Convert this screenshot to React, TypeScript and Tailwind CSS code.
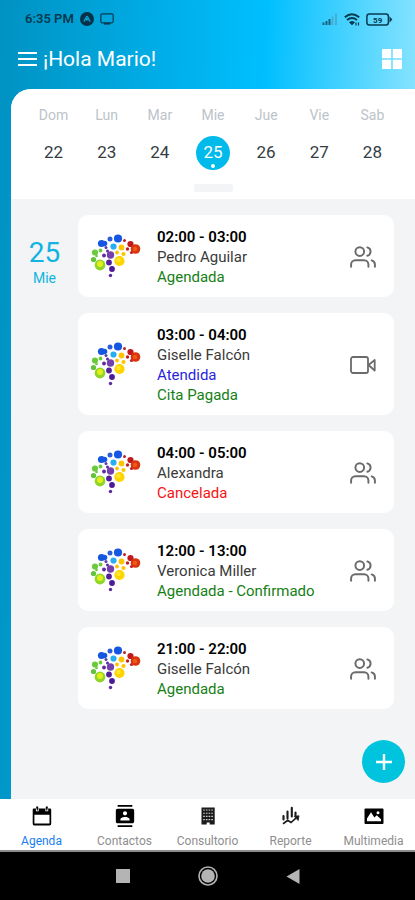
import { useState } from 'react';
import { FiUsers } from 'react-icons/fi';
import { MdContacts } from 'react-icons/md';

interface Status {
  label: string;
  color: string;
}

interface Appointment {
  time: string;
  patient: string;
  video?: boolean;
  statuses: Status[];
}

const days = [
  { name: 'Dom', date: 22 },
  { name: 'Lun', date: 23 },
  { name: 'Mar', date: 24 },
  { name: 'Mie', date: 25 },
  { name: 'Jue', date: 26 },
  { name: 'Vie', date: 27 },
  { name: 'Sab', date: 28 },
];

const appointments: Appointment[] = [
  { time: '02:00 - 03:00', patient: 'Pedro Aguilar', statuses: [{ label: 'Agendada', color: 'text-[#168016]' }] },
  {
    time: '03:00 - 04:00',
    patient: 'Giselle Falcón',
    video: true,
    statuses: [
      { label: 'Atendida', color: 'text-[#2a1fe0]' },
      { label: 'Cita Pagada', color: 'text-[#168016]' },
    ],
  },
  { time: '04:00 - 05:00', patient: 'Alexandra', statuses: [{ label: 'Cancelada', color: 'text-[#f51414]' }] },
  { time: '12:00 - 13:00', patient: 'Veronica Miller', statuses: [{ label: 'Agendada - Confirmado', color: 'text-[#168016]' }] },
  { time: '21:00 - 22:00', patient: 'Giselle Falcón', statuses: [{ label: 'Agendada', color: 'text-[#168016]' }] },
];

// cx, cy, r, fill
const dots: [number, number, number, string][] = [
  [21.5, 21.5, 3.6, '#1557e0'],
  [24.5, 21.5, 2.8, '#1557e0'],
  [30, 17, 2.5, '#2a5fd8'],
  [38, 16.5, 4.1, '#1557e0'],
  [33.5, 24.5, 3.1, '#27aef0'],
  [44.5, 18.5, 1.5, '#c0202a'],
  [50.5, 22, 3.1, '#c0181c'],
  [47.5, 27, 1.7, '#c0202a'],
  [51.5, 30.5, 1.6, '#c0202a'],
  [55.5, 27, 4.8, '#d8350f'],
  [41.5, 25.5, 2.9, '#ffc400'],
  [37, 30.5, 1.9, '#ffc400'],
  [43.5, 32, 2.1, '#ffc400'],
  [39.5, 39, 5.1, '#ffd400'],
  [15, 30.5, 3.1, '#6cc93c'],
  [20.5, 28.5, 1.9, '#6cc93c'],
  [16.5, 34, 1.3, '#6cc93c'],
  [13.5, 37.5, 2.6, '#62c23a'],
  [20, 43, 5.4, '#8ed628'],
  [26, 25.5, 1.5, '#5b3fa8'],
  [27.5, 29, 1.5, '#5b2a9c'],
  [24, 33.5, 1.9, '#5b2a9c'],
  [30.5, 33, 3.7, '#7440ae'],
  [29, 40.5, 2.9, '#53209c'],
  [32, 47, 2.9, '#4c1a96'],
  [30.5, 53.5, 1.7, '#5b2a9c'],
];

function BrainLogo() {
  return (
    <svg viewBox="0 0 70 70" className="-my-2 size-[70px] shrink-0" aria-hidden="true">
      {dots.map(([cx, cy, r, fill]) => (
        <circle key={`${cx}-${cy}`} cx={cx} cy={cy} r={r} fill={fill} />
      ))}
      <circle cx="20" cy="42" r="3" fill="#e4ee1c" />
      <circle cx="55" cy="27" r="2.2" fill="#ee5a1c" />
      <circle cx="38.5" cy="38" r="2.2" fill="#ffea28" />
    </svg>
  );
}

function VideoIcon() {
  return (
    <svg
      viewBox="0 0 26 26"
      className="size-[26px] shrink-0 text-[#6b6b6b]"
      fill="none"
      stroke="currentColor"
      strokeWidth="1.8"
      strokeLinejoin="round"
      aria-hidden="true"
    >
      <rect x="1" y="5" width="17" height="16" rx="2" />
      <path d="M18.500 13l6.200-5v10.500z" />
    </svg>
  );
}

function CalendarIcon() {
  return (
    <svg viewBox="0 0 20 20" className="size-5" fill="currentColor" aria-hidden="true">
      <path fillRule="evenodd" d="M2 2.500h16a1.200 1.200 0 0 1 1.200 1.200v14.100a1.600 1.600 0 0 1-1.600 1.600H2.200A1.500 1.500 0 0 1 .7 17.800V3.700A1.200 1.200 0 0 1 2 2.500zM2.400 8.800v8.800h15.100V8.800z" />
      <path d="M4.200.6h2v3h-2zM13.800.6h2v3h-2z" />
      <path d="M3.900 2.600h.8v1.800h1.200V2.600h.8v2.600H3.900zM13.400 2.600h.8v1.800h1.200V2.600h.8v2.600h-2.800z" fill="#fff" />
    </svg>
  );
}

function BuildingIcon() {
  return (
    <svg viewBox="0 0 20 20" className="size-5" aria-hidden="true">
      <path d="M3.500 1.500h13.200v17h-5v-2h-3v2H3.500z" fill="#1b1b1b" />
      <path d="M5.200 4h10M5.200 7.200h10M5.200 10.400h10M5.200 13.600h10" stroke="#d0d0d0" strokeWidth="1.100" strokeDasharray="1.600 1.100" />
    </svg>
  );
}

function ReportIcon() {
  return (
    <svg viewBox="0 0 20 20" className="size-5" fill="none" stroke="#1b1b1b" strokeLinecap="round" aria-hidden="true">
      <path d="M2.500 10v3.500M6.500 5.500v7M10.800 1.800v8.700M14.500 6.500v3" strokeWidth="2.100" />
      <path d="M2.500 17.500l4.200-3.200 3.300 2.200 5.500-4.800" strokeWidth="1.600" />
      <path d="M13.500 10.300l4.500-.5-.8 4.400z" fill="#1b1b1b" strokeWidth=".8" strokeLinejoin="round" />
    </svg>
  );
}

function PictureIcon() {
  return (
    <svg viewBox="0 0 20 20" className="size-5" aria-hidden="true">
      <rect x=".5" y="2.500" width="19" height="15.500" rx="1" fill="#000" />
      <path d="M3 15.200v-2.600l4-6.400 3.400 5.400 2.300-2.300 4.300 4v1.900z" fill="#fff" />
      <circle cx="14" cy="6.800" r="1.500" fill="#fff" />
    </svg>
  );
}

const tabs = [
  { label: 'Agenda', icon: <CalendarIcon /> },
  { label: 'Contactos', icon: <MdContacts className="size-[22px]" /> },
  { label: 'Consultorio', icon: <BuildingIcon /> },
  { label: 'Reporte', icon: <ReportIcon /> },
  { label: 'Multimedia', icon: <PictureIcon /> },
];

function StatusBar() {
  return (
    <div className="flex h-[38px] items-center justify-between pr-[22px] pl-[25px] text-[#073b50]">
      <div className="flex items-center gap-[6px]">
        <span className="text-[13px] font-semibold">6:35 PM</span>
        <svg viewBox="0 0 14 14" className="size-[14px]" aria-hidden="true">
          <circle cx="7" cy="7" r="7" fill="#063146" />
          <path d="M3.800 9.800L6.200 5q.8-1.500 1.600 0l2.400 4.800M5.800 8.500L7 6.500l1.200 2" fill="none" stroke="#0aa5d8" strokeWidth="1.200" />
        </svg>
        <svg viewBox="0 0 14 12" className="h-3 w-[14px]" fill="none" stroke="currentColor" aria-hidden="true">
          <rect x=".8" y=".8" width="12.400" height="9" rx="1.500" strokeWidth="1.200" />
          <path d="M4 10.800h6" strokeWidth="1.600" />
        </svg>
      </div>
      <div className="flex items-center gap-[6px]">
        <svg viewBox="0 0 16 12" className="h-3 w-4" fill="none" strokeWidth="2" aria-hidden="true">
          <path d="M1.500 12V9.500M4.500 12V8M7.500 12V6" stroke="#17617c" />
          <path d="M10.500 12V3.500M14 12V0.500" stroke="#4aa5c4" strokeWidth="1.600" />
        </svg>
        <svg viewBox="0 0 16 13" className="h-[13px] w-4" fill="none" stroke="currentColor" aria-hidden="true">
          <path d="M.8 4.200q7-6 14.400 0" strokeWidth="2" />
          <path d="M3 7q5-4 10 0" strokeWidth="1.900" />
          <path d="M5.300 9.300q2.700-2 5.400 0L8 12z" fill="currentColor" strokeWidth=".6" />
          <path d="M12 12.500v-3M14.500 9.500v3" strokeWidth="1.200" />
        </svg>
        <svg viewBox="0 0 27 13" className="h-[13px] w-[27px]" aria-hidden="true">
          <rect x=".9" y=".9" width="21.500" height="11.200" rx="2.500" fill="none" stroke="currentColor" strokeWidth="1.500" />
          <path d="M23.500 3.200l2.800 3.300-2.800 3.300z" fill="currentColor" />
          <text x="11.700" y="9.500" textAnchor="middle" fontSize="8" fontWeight="700" fill="currentColor">59</text>
        </svg>
      </div>
    </div>
  );
}

function AppointmentCard({ appointment }: { appointment: Appointment }) {
  return (
    <li className="flex items-center rounded-[10px] bg-white pt-3 pr-[18px] pb-[10px] pl-[2px]">
      <BrainLogo />
      <div className="ml-[7px] flex-1 text-[15px] leading-5 text-[#3a3a3a]">
        <p className="font-semibold text-black">{appointment.time}</p>
        <p>{appointment.patient}</p>
        {appointment.statuses.map((status) => (
          <p key={status.label} className={status.color}>{status.label}</p>
        ))}
      </div>
      {appointment.video ? (
        <VideoIcon />
      ) : (
        <FiUsers className="size-[26px] shrink-0 text-[#6b6b6b]" strokeWidth={1.8} />
      )}
    </li>
  );
}

export default function App() {
  const [selected, setSelected] = useState(25);
  const [activeTab, setActiveTab] = useState('Agenda');

  return (
    <div className="flex min-h-screen flex-col bg-[linear-gradient(92deg,#0092c2_0%,#00bfff_60%,#8ae4ff_95%)] font-[Roboto,sans-serif]">
      <StatusBar />

      <header className="flex h-[51px] items-center pr-[13px] pb-[9px] pl-[18px] text-white">
        <button type="button" aria-label="Menú">
          <svg viewBox="0 0 19 16" className="h-4 w-[19px]" stroke="currentColor" strokeWidth="1.900" aria-hidden="true">
            <path d="M0 2h19M0 8h19M0 14h19" />
          </svg>
        </button>
        <h1 className="ml-[6px] flex-1 text-[21px] leading-6">¡Hola Mario!</h1>
        <button type="button" aria-label="Vista">
          <svg viewBox="0 0 20 20" className="size-5" fill="currentColor" aria-hidden="true">
            <path d="M0 0h9.200v9.200H0zM10.800 0H20v9.200h-9.200zM0 10.800h9.200V20H0zM10.800 10.800H20V20h-9.200z" />
          </svg>
        </button>
      </header>

      <main className="relative ml-[11px] flex flex-1 flex-col overflow-hidden rounded-tl-[20px] bg-[#f2f4f5]">
        <section className="bg-white px-4 pt-4 pb-[7px]">
          <div className="grid grid-cols-7">
            {days.map((day) => (
              <div key={day.date} className="flex flex-col items-center">
                <span className="text-[14px] leading-5 text-[#bcc3c9]">{day.name}</span>
                <button
                  type="button"
                  onClick={() => setSelected(day.date)}
                  className={`relative mt-[11px] size-[34px] rounded-full text-[17px] ${
                    day.date === selected ? 'bg-[#00baec] text-white' : 'text-[#343d42]'
                  }`}
                >
                  {day.date}
                  {day.date === selected && (
                    <span className="absolute bottom-[2px] left-[15px] size-1 rounded-full bg-white" />
                  )}
                </button>
              </div>
            ))}
          </div>
          <div className="mx-auto mt-[14px] h-2 w-[39px] rounded-[2px] bg-[#f2f4f5]" />
        </section>

        <section className="flex pt-4 pr-[21px] pb-20">
          <div className="w-[67px] shrink-0 pt-[21px] text-center text-[#10b3e2]">
            <p className="text-[28px] leading-[34px]">25</p>
            <p className="text-[14px] leading-4">Mie</p>
          </div>
          <ul className="flex flex-1 flex-col gap-4">
            {appointments.map((appointment) => (
              <AppointmentCard key={appointment.time} appointment={appointment} />
            ))}
          </ul>
        </section>

        <button
          type="button"
          aria-label="Agregar cita"
          className="absolute right-[10px] bottom-4 flex size-[43px] items-center justify-center rounded-full bg-[#00c4de] text-white"
        >
          <svg viewBox="0 0 16 16" className="size-4" stroke="currentColor" strokeWidth="2.400" aria-hidden="true">
            <path d="M8 0v16M0 8h16" />
          </svg>
        </button>
      </main>

      <nav className="grid h-[53px] grid-cols-5 border-b-2 border-[#8c8c8c] bg-white">
        {tabs.map((tab) => (
          <button
            key={tab.label}
            type="button"
            onClick={() => setActiveTab(tab.label)}
            className={`flex flex-col items-center pt-[6px] text-[12px] leading-4 ${
              activeTab === tab.label ? 'text-[#1a7df0]' : 'text-[#8e8e8e]'
            }`}
          >
            <span className="flex h-[22px] items-center text-black">{tab.icon}</span>
            <span className="mt-[6px]">{tab.label}</span>
          </button>
        ))}
      </nav>

      <div className="flex h-12 items-center justify-center gap-[65px] bg-black text-[#b4b4b4]">
        <button type="button" aria-label="Recientes" className="flex w-5 justify-center">
          <span className="size-[14px] bg-[#b4b4b4]" />
        </button>
        <button type="button" aria-label="Inicio">
          <svg viewBox="0 0 20 20" className="size-5" aria-hidden="true">
            <circle cx="10" cy="10" r="9" fill="none" stroke="currentColor" strokeWidth="1.600" />
            <circle cx="10" cy="10" r="6.800" fill="currentColor" />
          </svg>
        </button>
        <button type="button" aria-label="Atrás" className="flex w-5 justify-center">
          <svg viewBox="0 0 14 15" className="h-[15px] w-[14px]" fill="currentColor" aria-hidden="true">
            <path d="M13.500 0v15L.5 7.500z" />
          </svg>
        </button>
      </div>
    </div>
  );
}
